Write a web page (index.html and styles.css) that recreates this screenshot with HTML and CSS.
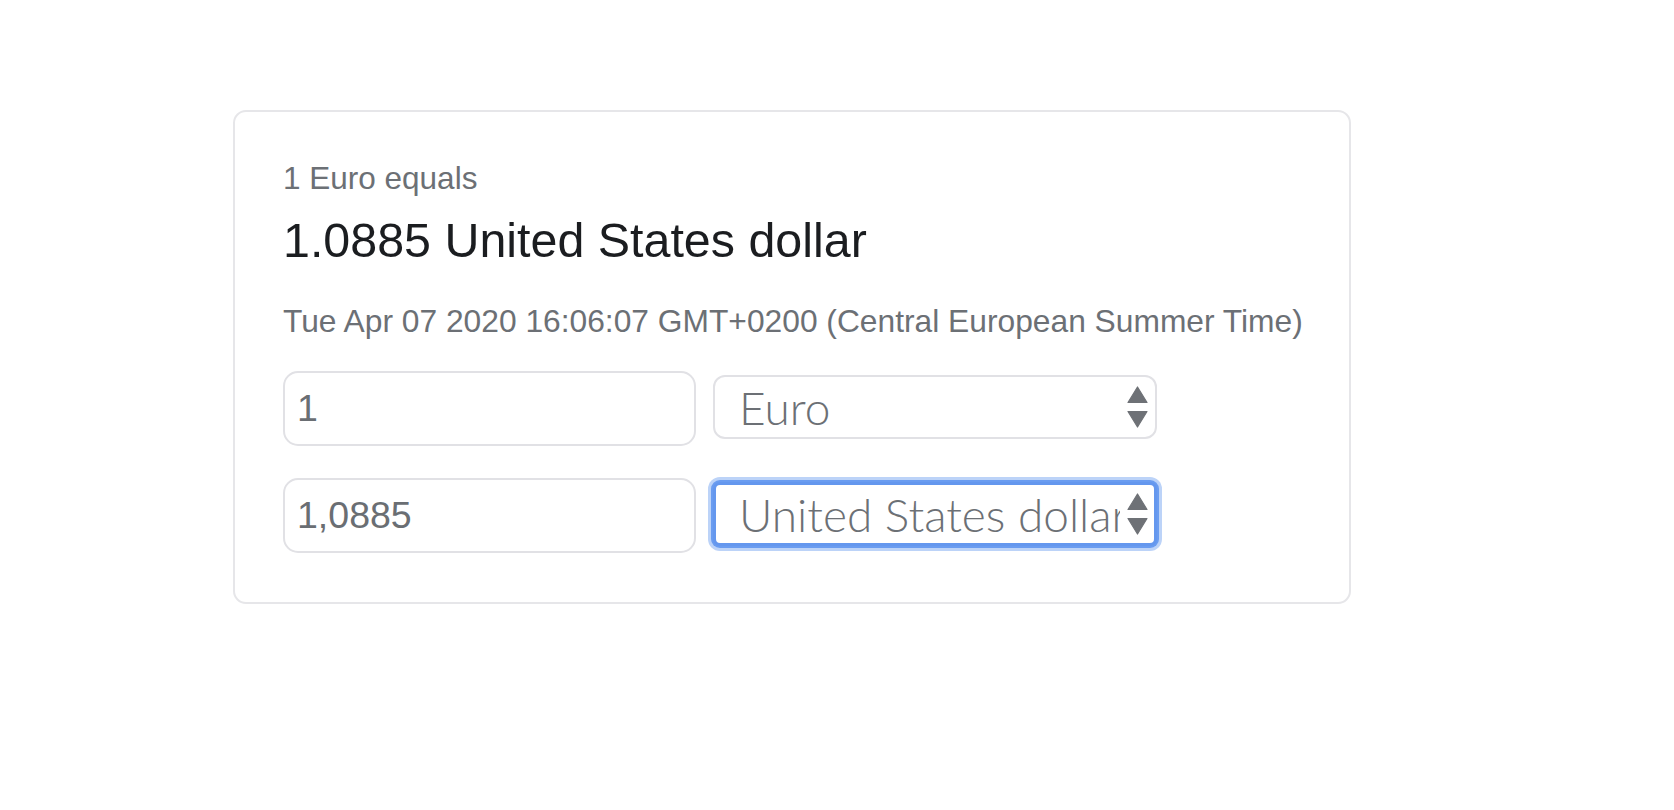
FILE: index.html
```html
<!DOCTYPE html>
<html lang="en">
<head>
<meta charset="utf-8">
<title>Currency converter</title>
<link rel="stylesheet" href="styles.css">
</head>
<body>
<div class="card">
  <p class="muted lead-line">1 Euro equals</p>
  <h3 class="result">1.0885 United States dollar</h3>
  <p class="muted date-line">Tue Apr 07 2020 16:06:07 GMT+0200 (Central European Summer Time)</p>
  <div class="row">
    <input class="amount" type="text" value="1">
    <div class="select-wrap">
      <select class="currency">
        <option>Euro</option>
        <option>United States dollar</option>
      </select>
      <svg class="arrows" width="21" height="42" viewBox="0 0 21 42"><path d="M1 16.5 L10.5 1 L20 16.5 Z" fill="#6e7176" stroke="#6e7176" stroke-width="1.2" stroke-linejoin="round"/><path d="M1 25.5 L20 25.5 L10.5 41 Z" fill="#6e7176" stroke="#6e7176" stroke-width="1.2" stroke-linejoin="round"/></svg>
    </div>
  </div>
  <div class="row">
    <input class="amount" type="text" value="1,0885">
    <div class="select-wrap">
      <select class="currency focused">
        <option>United States dollar</option>
        <option>Euro</option>
      </select>
      <svg class="arrows" width="21" height="42" viewBox="0 0 21 42"><path d="M1 16.5 L10.5 1 L20 16.5 Z" fill="#6e7176" stroke="#6e7176" stroke-width="1.2" stroke-linejoin="round"/><path d="M1 25.5 L20 25.5 L10.5 41 Z" fill="#6e7176" stroke="#6e7176" stroke-width="1.2" stroke-linejoin="round"/></svg>
    </div>
  </div>
</div>
</body>
</html>
```
FILE: styles.css
```css
* { box-sizing: border-box; }
html, body { margin: 0; padding: 0; background: #ffffff; }
body { font-family: "Liberation Sans", Arial, sans-serif; color: #212529; }

.card {
  width: 1118px;
  margin: 110px 0 0 233px;
  padding: 47px 48px 49px 48px;
  border: 2px solid #e6e6e9;
  border-radius: 13px;
  background: #fff;
}

.muted { color: #6c7075; }

.lead-line {
  margin: 0;
  font-size: 31.5px;
  line-height: 38px;
}

.result {
  margin: 15px 0 0 0;
  font-size: 48.4px;
  line-height: 57px;
  font-weight: 400;
  color: #1b1d20;
}

.date-line {
  margin: 33px 0 0 0;
  font-size: 31.75px;
  line-height: 38px;
  white-space: nowrap;
}

.row {
  display: flex;
  align-items: flex-start;
  gap: 17px;
  margin-top: 31px;
}
.row + .row { margin-top: 32px; }

.amount {
  width: 413px;
  height: 75px;
  margin: 0;
  padding: 0 12px;
  border: 2px solid #e1e1e5;
  border-radius: 15px;
  font-family: "Liberation Sans", Arial, sans-serif;
  font-size: 37.5px;
  color: #6a6e73;
  background: #fff;
  outline: none;
}

.select-wrap {
  position: relative;
  width: 444px;
  height: 64px;
  margin-top: 4px;
}

.currency {
  -webkit-appearance: none;
  appearance: none;
  width: 100%;
  height: 64px;
  margin: 0;
  padding: 0 34px 0 24px;
  border: 2px solid #e1e1e5;
  border-radius: 12px;
  background: #fff;
  font-family: Lato, Roboto, "Liberation Sans", sans-serif;
  font-weight: 300;
  font-size: 46px;
  color: #6c7075;
  outline: none;
}

.currency.focused {
  border: 3px solid #6497ee;
  border-radius: 7px;
  padding-left: 23px;
  box-shadow: 0 0 0 2px #6a9cf0, 0 0 0 5px #bcd3f8;
}

.arrows {
  position: absolute;
  right: 9px;
  top: 11px;
  pointer-events: none;
}
```
